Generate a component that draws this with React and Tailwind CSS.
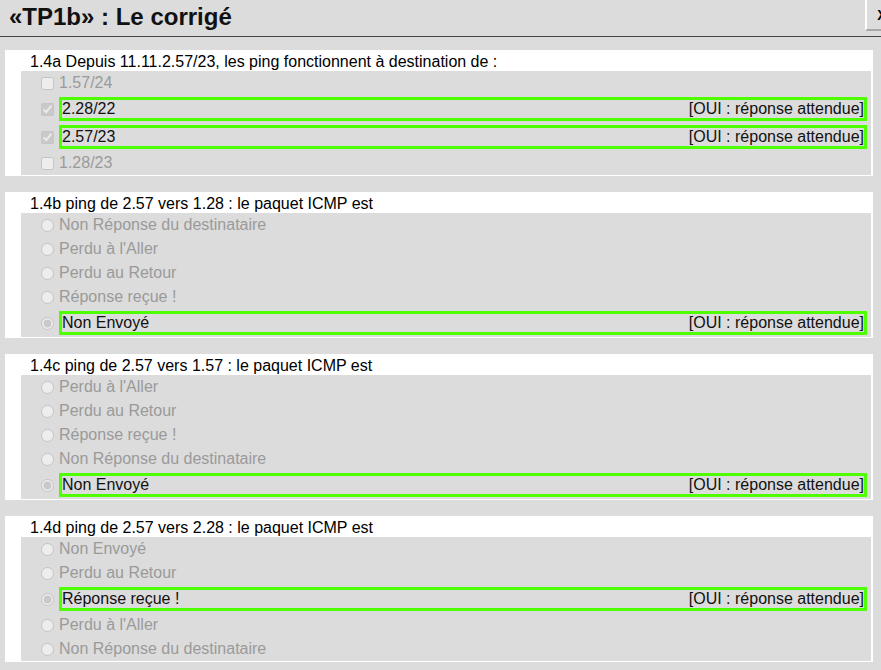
import React from "react";

const OK = "[OUI : réponse attendue]";

const questions = [
  {
    id: "1.4a",
    title: "1.4a Depuis 11.11.2.57/23, les ping fonctionnent à destination de :",
    type: "checkbox",
    items: [
      { label: "1.57/24" },
      { label: "2.28/22", good: true },
      { label: "2.57/23", good: true },
      { label: "1.28/23" },
    ],
  },
  {
    id: "1.4b",
    title: "1.4b ping de 2.57 vers 1.28 : le paquet ICMP est",
    type: "radio",
    items: [
      { label: "Non Réponse du destinataire" },
      { label: "Perdu à l'Aller" },
      { label: "Perdu au Retour" },
      { label: "Réponse reçue !" },
      { label: "Non Envoyé", good: true },
    ],
  },
  {
    id: "1.4c",
    title: "1.4c ping de 2.57 vers 1.57 : le paquet ICMP est",
    type: "radio",
    items: [
      { label: "Perdu à l'Aller" },
      { label: "Perdu au Retour" },
      { label: "Réponse reçue !" },
      { label: "Non Réponse du destinataire" },
      { label: "Non Envoyé", good: true },
    ],
  },
  {
    id: "1.4d",
    title: "1.4d ping de 2.57 vers 2.28 : le paquet ICMP est",
    type: "radio",
    items: [
      { label: "Non Envoyé" },
      { label: "Perdu au Retour" },
      { label: "Réponse reçue !", good: true },
      { label: "Perdu à l'Aller" },
      { label: "Non Réponse du destinataire" },
    ],
  },
];

function Row({ q, item }) {
  // correct answers are boxed in green, the rest are greyed out
  if (item.good) {
    return (
      <div className="flex items-center h-[28px] pl-[20px] pr-[4px]">
        <input type={q.type} name={q.id} checked disabled readOnly className="m-0 w-[13px] h-[13px] shrink-0" />
        <div className="ml-[5px] flex-1 h-[24px] border-[3px] border-[#4dff00] flex items-center justify-between text-[#111]">
          <span>{item.label}</span>
          <span>{OK}</span>
        </div>
      </div>
    );
  }
  return (
    <div className="flex items-center h-[24px] pl-[20px] pr-[4px]">
      <input type={q.type} name={q.id} disabled readOnly className="m-0 w-[13px] h-[13px] shrink-0" />
      <span className="ml-[5px] text-[#9a9a9a]">{item.label}</span>
    </div>
  );
}

export default function App() {
  return (
    <div className="relative w-[881px] h-[670px] overflow-hidden bg-[#dcdcdc] text-[16px] leading-[20px] text-black" style={{ fontFamily: '"Liberation Sans", Arial, sans-serif' }}>
      <div className="h-[37px] border-b border-[#444] pl-[9px] pt-[4px]">
        <h1 className="text-[24px] leading-[26px] font-bold text-[#111]">«TP1b» : Le corrigé</h1>
      </div>
      <button className="absolute left-[865px] top-0 w-[32px] h-[31px] bg-[#dcdcdc] border-l-2 border-white border-b-2 border-b-[#a8a8a8] text-[14px] font-bold text-black flex items-center justify-center">
        X
      </button>

      <div className="pt-[13px] pl-[5px] pr-[8px] flex flex-col gap-[16px]">
        {questions.map((q) => (
          <div key={q.id} className="bg-white pr-[2px] pb-px">
            <div className="h-[21px] pl-[25px] leading-[21px] pt-[1px]">{q.title}</div>
            <div className="ml-[16px] bg-[#dcdcdc]">
              {q.items.map((item, i) => (
                <Row key={i} q={q} item={item} />
              ))}
            </div>
          </div>
        ))}
      </div>
    </div>
  );
}
